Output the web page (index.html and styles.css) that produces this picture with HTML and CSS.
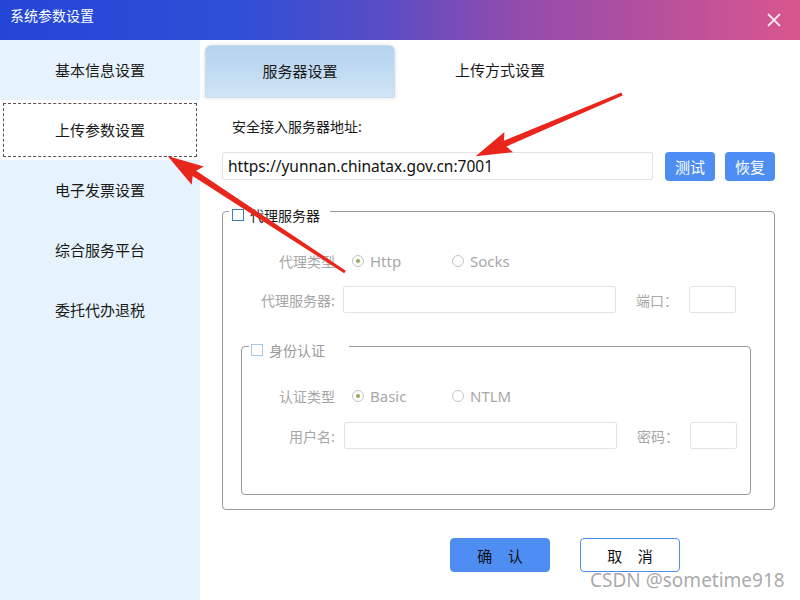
FILE: index.html
```html
<!DOCTYPE html>
<html lang="zh-CN">
<head>
  <meta charset="UTF-8">
  <title>系统参数设置</title>
  <link rel="stylesheet" href="styles.css">
</head>
<body>
  <div class="window">
    <div class="titlebar">
      <span class="title">系统参数设置</span>
      <svg class="close" width="14" height="14" viewBox="0 0 14 14">
        <path d="M1 1 L13 13 M13 1 L1 13" stroke="#f3e4f0" stroke-width="1.8" fill="none"/>
      </svg>
    </div>

    <div class="body">
      <!-- 左侧菜单 -->
      <ul class="nav">
        <li>基本信息设置</li>
        <li class="active">上传参数设置</li>
        <li>电子发票设置</li>
        <li>综合服务平台</li>
        <li>委托代办退税</li>
      </ul>

      <div class="main">
        <div class="tabs">
          <div class="tab active">服务器设置</div>
          <div class="tab">上传方式设置</div>
        </div>

        <div class="content">
          <div class="field-label">安全接入服务器地址:</div>
          <div class="url-row">
            <input class="url" type="text" value="https://yunnan.chinatax.gov.cn:7001">
            <button class="btn-sm">测试</button>
            <button class="btn-sm">恢复</button>
          </div>

          <fieldset class="group">
            <legend class="legend"><span class="check"></span>代理服务器</legend>
            <div class="frow first">
              <span class="lbl">代理类型</span>
              <div class="radios">
                <span class="radio checked"><i></i>Http</span>
                <span class="radio"><i></i>Socks</span>
              </div>
            </div>
            <div class="frow">
              <span class="lbl">代理服务器:</span>
              <input class="box wide" type="text" disabled>
              <span class="lbl-side">端口：</span>
              <input class="box small" type="text" disabled>
            </div>

            <fieldset class="group inner">
              <legend class="legend off"><span class="check"></span>身份认证</legend>
              <div class="frow first">
                <span class="lbl">认证类型</span>
                <div class="radios">
                  <span class="radio checked"><i></i>Basic</span>
                  <span class="radio"><i></i>NTLM</span>
                </div>
              </div>
              <div class="frow">
                <span class="lbl">用户名:</span>
                <input class="box wide" type="text" disabled>
                <span class="lbl-side">密码：</span>
                <input class="box small" type="text" disabled>
              </div>
            </fieldset>
          </fieldset>

          <div class="actions">
            <button class="btn primary">确 认</button>
            <button class="btn ghost">取 消</button>
          </div>
        </div>
      </div>
    </div>

    <!-- 标注箭头 -->
    <svg class="marks" width="800" height="600" viewBox="0 0 800 600">
      <g transform="translate(622 94) rotate(157)">
        <polygon points="0,-1.5 127,-3.2 123,-11 159,0 123,11 127,3.2 0,1.5" fill="#e8261c"/>
      </g>
      <g transform="translate(345 272) rotate(-146.8)">
        <polygon points="0,-1.5 180,-3.2 176,-11 212,0 176,11 180,3.2 0,1.5" fill="#e8261c"/>
      </g>
    </svg>

    <div class="watermark">CSDN @sometime918</div>
  </div>
</body>
</html>
```

FILE: styles.css
```css
body {
  margin: 0;
  font-family: "Noto Sans", "Noto Sans CJK SC", sans-serif;
  color: #222;
}

.window {
  position: relative;
  width: 800px;
  height: 600px;
  overflow: hidden;
  background: #fff;
}

.titlebar {
  height: 40px;
  display: flex;
  align-items: flex-start;
  justify-content: space-between;
  background: linear-gradient(90deg, #2346d6 0%, #2f4fd6 30%, #5a4cc4 48%, #8a4cb0 62%, #b24f9e 80%, #d9568e 100%);
}

.title {
  color: #fff;
  font-size: 14px;
  line-height: 18px;
  margin: 6px 0 0 10px;
  font-family: "Noto Sans CJK SC", sans-serif;
}

.close {
  margin: 13px 19px 0 0;
}

.body {
  display: flex;
  height: 560px;
}

.nav {
  width: 200px;
  margin: 0;
  padding: 0;
  list-style: none;
  background: #e6f3fc;
}

.nav li {
  height: 60px;
  line-height: 60px;
  text-align: center;
  font-size: 15px;
  font-family: "Noto Sans CJK SC", sans-serif;
  color: #1a1a1a;
}

.nav li.active {
  background: #fff;
  outline: 1px dashed #555;
  outline-offset: -4px;
}

.main {
  flex: 1;
}

.tabs {
  display: flex;
  gap: 10px;
  padding: 5px 0 0 5px;
}

.tab {
  width: 190px;
  height: 53px;
  line-height: 49px;
  text-align: center;
  font-size: 15px;
  font-family: "Noto Sans CJK SC", sans-serif;
  color: #1a1a1a;
  box-sizing: border-box;
}

.tab.active {
  background: linear-gradient(180deg, #b4d3ee 0%, #c4ddf2 60%, #d3e6f6 100%);
  border: 1px solid #c6dbee;
  border-radius: 6px 6px 0 0;
  box-shadow: 0 0 4px rgba(0, 0, 0, 0.12);
}

.content {
  margin: 0 25px 0 22px;
}

.field-label {
  margin: 20px 0 0 10px;
  font-size: 14px;
  line-height: 18px;
  color: #1a1a1a;
}

.url-row {
  display: flex;
  align-items: flex-start;
  margin-top: 16px;
}

.url {
  width: 431px;
  height: 28px;
  box-sizing: border-box;
  border: 1px solid #e2e2e2;
  border-radius: 2px;
  padding: 0 5px;
  font-family: "Noto Sans", sans-serif;
  font-size: 15.5px;
  color: #111;
  margin-right: 12px;
}

.btn-sm {
  width: 50px;
  height: 29px;
  border: none;
  border-radius: 4px;
  background: #4e8ef2;
  color: #fff;
  font-size: 15px;
  font-family: "Noto Sans CJK SC", sans-serif;
  padding: 0;
  margin-right: 10px;
}

.btn-sm:last-child {
  margin-right: 0;
}

.group {
  margin: 19px 0 0 0;
  padding: 0;
  border: 1px solid #9a9a9a;
  border-radius: 4px;
  min-width: 0;
}

.legend {
  display: flex;
  align-items: center;
  margin-left: 6px;
  padding: 8px 10px 0 3px;
  font-size: 14px;
  line-height: 14px;
  font-family: "Noto Sans CJK SC", sans-serif;
  color: #1a1a1a;
}

.check {
  width: 12px;
  height: 12px;
  box-sizing: border-box;
  border: 1.5px solid #3b7dc4;
  margin-right: 6px;
  background: #fff;
}

.legend.off {
  margin-left: 7px;
  padding: 8px 24px 0 2px;
  color: #9a9a9a;
}

.legend.off .check {
  border: 1px solid #a9c8e8;
}

.frow {
  display: flex;
  align-items: center;
  height: 27px;
  margin-top: 11px;
  font-size: 14px;
  color: #a6a6a6;
}

.frow.first {
  height: 28px;
  margin-top: 25px;
}

.lbl {
  width: 112px;
  text-align: right;
  margin-right: 8px;
  font-family: "Noto Sans CJK SC", sans-serif;
}

.radios {
  display: flex;
  margin-left: 9px;
}

.radio {
  display: flex;
  align-items: center;
  width: 100px;
  font-size: 15px;
  color: #a8a8a8;
}

.radio i {
  width: 12px;
  height: 12px;
  box-sizing: border-box;
  border: 1px solid #c4c4c4;
  border-radius: 50%;
  margin-right: 6px;
  display: flex;
  align-items: center;
  justify-content: center;
}

.radio.checked i::after {
  content: "";
  width: 4px;
  height: 4px;
  border-radius: 50%;
  background: #8db05a;
}

.box {
  height: 27px;
  box-sizing: border-box;
  border: 1px solid #e4e4e4;
  border-radius: 2px;
  background: #fff;
}

.box.wide {
  width: 273px;
}

.box.small {
  width: 47px;
}

.lbl-side {
  width: 53px;
  margin-left: 20px;
  font-family: "Noto Sans CJK SC", sans-serif;
}

.group.inner {
  margin: 22px 23px 14px 18px;
  padding-bottom: 45px;
}

.inner .frow {
  margin-top: 12px;
}

.inner .frow.first {
  margin-top: 25px;
}

.inner .lbl {
  width: 93px;
  margin-right: 9px;
}

.inner .radios {
  margin-left: 8px;
}

.actions {
  display: flex;
  gap: 30px;
  margin: 28px 0 0 228px;
}

.btn {
  width: 100px;
  height: 34px;
  box-sizing: border-box;
  border-radius: 4px;
  font-size: 15px;
  font-family: "Noto Sans CJK SC", sans-serif;
  word-spacing: 12px;
  color: #111;
  padding: 0;
}

.btn.primary {
  background: #4e8ef2;
  border: 1px solid #4e8ef2;
}

.btn.ghost {
  background: #fff;
  border: 1px solid #4e8ef2;
}

.marks {
  position: absolute;
  left: 0;
  top: 0;
  pointer-events: none;
}

.watermark {
  position: absolute;
  left: 590px;
  top: 567px;
  font-size: 19px;
  line-height: 26px;
  font-family: "Noto Sans", sans-serif;
  color: rgba(110, 110, 110, 0.6);
}
```
